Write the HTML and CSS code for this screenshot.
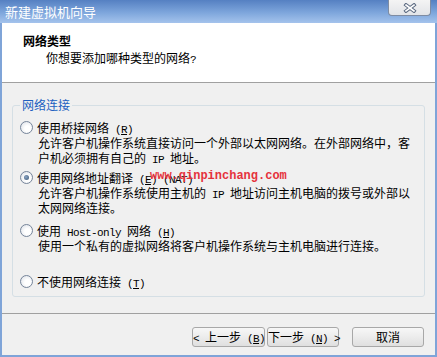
FILE: index.html
```html
<!DOCTYPE html>
<html lang="zh-CN">
<head>
<meta charset="utf-8">
<title>新建虚拟机向导</title>
<link rel="stylesheet" href="styles.css">
</head>
<body>
<div class="window">
  <div class="titlebar">
    <span class="title">新建虚拟机向导</span>
    <button class="close" aria-label="关闭">
      <svg width="14" height="10" viewBox="0 0 14 10">
        <path d="M3 2 L11 8 M11 2 L3 8" stroke="#5d6b82" stroke-width="3.6" stroke-linecap="square" fill="none"/>
        <path d="M3 2 L11 8 M11 2 L3 8" stroke="#ffffff" stroke-width="1.6" stroke-linecap="square" fill="none"/>
      </svg>
    </button>
  </div>
  <div class="client">
    <div class="header">
      <div class="h-title">网络类型</div>
      <div class="h-sub">你想要添加哪种类型的网络<span class="a">?</span></div>
    </div>
    <div class="body">
      <fieldset class="group">
        <legend>网络连接</legend>
        <div class="option">
          <div class="opt-label"><span class="radio"></span><span class="txt">使用桥接网络<span class="a"> (<u>R</u>)</span></span></div>
          <div class="desc">允许客户机操作系统直接访问一个外部以太网网络。在外部网络中，客<br>户机必须拥有自己的<span class="a"> IP </span>地址。</div>
        </div>
        <div class="option opt-nat">
          <div class="opt-label"><span class="radio checked"></span><span class="txt">使用网络地址翻译<span class="a"> (<u>E</u>) (NAT)</span></span></div>
          <div class="desc">允许客户机操作系统使用主机的<span class="a"> IP </span>地址访问主机电脑的拨号或外部以<br>太网网络连接。</div>
        </div>
        <div class="option opt-host">
          <div class="opt-label"><span class="radio"></span><span class="txt">使用<span class="a"> Host-only </span>网络<span class="a"> (<u>H</u>)</span></span></div>
          <div class="desc">使用一个私有的虚拟网络将客户机操作系统与主机电脑进行连接。</div>
        </div>
        <div class="option opt-none">
          <div class="opt-label"><span class="radio"></span><span class="txt">不使用网络连接<span class="a"> (<u>T</u>)</span></span></div>
        </div>
      </fieldset>
    </div>
    <div class="footer">
      <button class="btn btn-back"><span class="a">&lt; </span>上一步<span class="a"> (<u>B</u>)</span></button>
      <button class="btn btn-next">下一步<span class="a"> (<u>N</u>) &gt;</span></button>
      <button class="btn btn-cancel">取消</button>
    </div>
  </div>
</div>
<div class="watermark">www.qinpinchang.com</div>
</body>
</html>
```
FILE: styles.css
```css
* { box-sizing: border-box; }
html, body { margin: 0; padding: 0; }
body {
  width: 437px;
  height: 357px;
  overflow: hidden;
  position: relative;
  font-family: "Noto Sans CJK SC", "Noto Sans", sans-serif;
  font-size: 12px;
  color: #000;
  background: #7ea3d6;
}
.a {
  font-family: "Liberation Mono", monospace;
  font-size: 11px;
  letter-spacing: -0.6px;
  line-height: 10px;
}
.window {
  width: 437px;
  height: 357px;
  display: flex;
  flex-direction: column;
  background: #7fa4d8;
}
.titlebar {
  height: 23px;
  flex: none;
  display: flex;
  align-items: flex-start;
  padding-left: 5px;
  background: linear-gradient(#5580c2, #7ea6dc 55%, #a4c3ec);
}
.title {
  color: #fff;
  font-size: 13px;
  line-height: 24px;
}
.close {
  margin-left: auto;
  margin-right: 6px;
  width: 43px;
  height: 16px;
  padding: 0;
  border: 1px solid #7e8ca3;
  border-top: none;
  border-radius: 0 0 4px 4px;
  background: linear-gradient(#f4f4f4, #e2e4e8);
  display: flex;
  align-items: center;
  justify-content: center;
}
.client {
  flex: 1;
  margin: 0 2px 2px;
  background: #f0f0f0;
  display: flex;
  flex-direction: column;
}
.header {
  height: 60px;
  flex: none;
  background: #fff;
  border-bottom: 1px solid #a0a0a0;
  padding: 10px 0 0 21px;
}
.h-title { font-weight: bold; line-height: 15px; }
.h-sub { line-height: 15px; margin-top: 2px; padding-left: 23px; }
.body {
  flex: 1;
  padding: 15px 10px 0;
}
.group {
  margin: 0;
  min-width: 0;
  border: 1px solid #d5dfe5;
  border-radius: 3px;
  padding: 8px 0 7px 7px;
}
.group legend {
  padding: 0 2px;
  line-height: 14px;
  color: #2160c0;
}
.opt-label {
  display: flex;
  align-items: center;
  height: 15px;
  line-height: 15px;
  white-space: nowrap;
}
.desc {
  padding-left: 18px;
  line-height: 15px;
  white-space: nowrap;
}
.opt-nat { margin-top: 5px; }
.opt-host { margin-top: 8px; }
.opt-none { margin-top: 21px; }
.radio {
  width: 13px;
  height: 13px;
  flex: none;
  margin-right: 4px;
  border-radius: 50%;
  border: 1px solid #76859a;
  background: radial-gradient(circle at 60% 60%, #ffffff 30%, #e6e9ee 75%, #d2d7de);
  display: flex;
  align-items: center;
  justify-content: center;
}
.radio.checked::after {
  content: "";
  width: 5px;
  height: 5px;
  border-radius: 50%;
  background: radial-gradient(circle at 40% 40%, #8aa4c4, #3b5674);
}
.footer {
  height: 42px;
  flex: none;
  border-top: 1px solid #a0a0a0;
  display: flex;
  justify-content: flex-end;
  align-items: flex-start;
  padding: 13px 11px 0 0;
}
.btn {
  height: 20px;
  width: 72px;
  padding: 0;
  border: 1px solid #a8a8a8;
  border-radius: 3px;
  background: linear-gradient(#f7f7f7, #ececec 50%, #dfdfdf);
  font-family: "Noto Sans CJK SC", sans-serif;
  font-size: 12px;
  line-height: 18px;
  color: #000;
  white-space: nowrap;
}
.btn-back { width: 73px; }
.btn-next { margin-left: 2px; }
.btn-cancel { margin-left: 13px; }
.watermark {
  position: absolute;
  left: 150px;
  top: 169px;
  font-family: "Liberation Mono", monospace;
  font-size: 12px;
  font-weight: bold;
  line-height: 15px;
  color: #e5323c;
}
```
